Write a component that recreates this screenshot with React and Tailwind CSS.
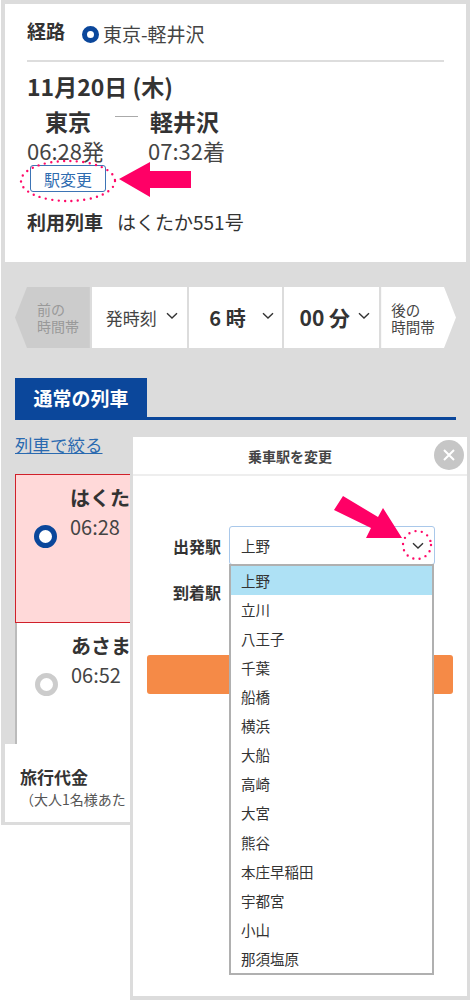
const stations = ["上野", "立川", "八王子", "千葉", "船橋", "横浜", "大船", "高崎", "大宮", "熊谷", "本庄早稲田", "宇都宮", "小山", "那須塩原"];

function Chevron({ className }) {
  return (
    <svg className={className} width="12" height="8" viewBox="0 0 12 8" fill="none">
      <path d="M1 1.2 6 6l5-4.8" stroke="#333" strokeWidth="1.4" />
    </svg>
  );
}

function Radio({ on }) {
  return (
    <span className={`block h-[23px] w-[23px] rounded-full border-[5px] bg-white ${on ? "border-[#0b479b]" : "border-[#cccccc]"}`} />
  );
}

function TrainRow({ name, time, on }) {
  return (
    <div className={`flex ${on ? "h-[149px] border border-[#d0202a] bg-[#ffd9d9]" : "h-[121px] border-l-2 border-[#bbbbbb] bg-white"}`}>
      <div className="flex w-[54px] shrink-0 items-start justify-center pl-[5px] pt-[50px]">
        <Radio on={on} />
      </div>
      <div className="pt-[8px]">
        <div className="text-[20px] leading-[30px] font-bold whitespace-nowrap text-[#333]">{name}</div>
        <div className="text-[20px] leading-[28px] text-[#444]">{time}</div>
      </div>
    </div>
  );
}

function Modal() {
  return (
    <div className="absolute top-[437px] left-[133px] h-[559px] w-[334px] bg-white">
      <div className="relative flex h-[39px] items-center justify-center border-b-2 border-[#eeeeee]">
        <span className="pr-[20px] pt-[1px] text-[14px] font-bold text-[#444]">乗車駅を変更</span>
        <span className="absolute top-[3px] right-[3px] flex h-[30px] w-[30px] items-center justify-center rounded-full bg-[#c6c6c6]">
          <svg width="14" height="14" viewBox="0 0 14 14" fill="none">
            <path d="M2 2l10 10M12 2 2 12" stroke="#fff" strokeWidth="2" />
          </svg>
        </span>
      </div>

      <div className="flex items-center pt-[50px]">
        <span className="w-[96px] pl-[40px] text-[16px] font-bold text-[#333]">出発駅</span>
        <div className="flex h-[39px] w-[206px] items-center justify-between rounded-[3px] border border-[#a9c8ea] pr-[10px] pl-[11px] text-[14.5px] text-[#333]">
          上野
          <Chevron />
        </div>
      </div>
      <div className="pt-[4px] pl-[40px] text-[16px] leading-[46px] font-bold text-[#333]">到着駅</div>
      <div className="mx-[14px] mt-[40px] h-[39px] rounded-[3px] bg-[#f58a47]" />

      {/* open select list */}
      <div className="absolute top-[127px] left-[96px] w-[205px] border-2 border-[#b0b0b0] bg-white">
        {stations.map((s, i) => (
          <div key={s} className={`flex h-[29.1px] items-center pl-[10px] text-[14.5px] text-[#333] ${i === 0 ? "bg-[#aee1f5]" : ""}`}>
            {s}
          </div>
        ))}
      </div>
    </div>
  );
}

export default function App() {
  return (
    <div
      className="relative h-[1000px] w-[470px] overflow-hidden bg-white text-[#333]"
      style={{ fontFamily: '"Noto Sans CJK JP", "Noto Sans", sans-serif' }}
    >
      <div className="ml-[1px] h-[825px] bg-[#dcdcdc] pt-[4px] pl-[4px]">
        {/* Top card */}
        <div className="h-[258px] w-[461px] bg-white px-[22px]">
          <div className="flex h-[58px] items-center border-b-2 border-[#dddddd] pt-[4px]">
            <span className="w-[55px] pb-[6px] text-[19px] font-bold">経路</span>
            <span className="h-[17px] w-[17px] rounded-full border-[5px] border-[#0b479b] bg-white" />
            <span className="pl-[4px] text-[19px] text-[#444]">東京-軽井沢</span>
          </div>
          <div className="pt-[8px] text-[23px] leading-[32px] font-bold">11月20日 (木)</div>
          <div className="flex items-center pt-[2px]">
            <span className="w-[88px] pl-[18px] text-[23px] leading-[34px] font-bold">東京</span>
            <span className="h-[1px] w-[23px] -translate-y-[5px] bg-[#aaaaaa]" />
            <span className="pl-[12px] text-[23px] leading-[34px] font-bold">軽井沢</span>
          </div>
          <div className="flex -translate-y-[1px] text-[22px] leading-[27px] text-[#444]">
            <span className="w-[121px]">06:28発</span>
            <span>07:32着</span>
          </div>
          <div className="ml-[3px] flex h-[27px] w-[76px] items-center justify-center rounded-[3px] border-[1.5px] border-[#3d74b5] text-[16px] text-[#2f6cb0]">
            駅変更
          </div>
          <div className="flex items-center pt-[16px]">
            <span className="w-[90px] text-[19px] leading-[28px] font-bold">利用列車</span>
            <span className="text-[19px] leading-[28px] text-[#333]">はくたか551号</span>
          </div>
        </div>

        {/* Time selector */}
        <div className="mt-[25px] ml-[10px] flex h-[61px] w-[441px] gap-[2px]">
          <div className="flex w-[75px] items-center justify-center bg-[#cccccc] pl-[11px] text-[14px] leading-[17px] text-[#999] [clip-path:polygon(16%_0,100%_0,100%_100%,16%_100%,0_50%)]">
            <span>前の<br />時間帯</span>
          </div>
          <div className="flex w-[95px] items-center justify-center gap-[9px] bg-white pl-[5px] text-[17px] text-[#444]">
            発時刻 <Chevron className="-translate-y-[2px]" />
          </div>
          <div className="flex w-[94px] items-center justify-center gap-[16px] bg-white pl-[12px] text-[20px] font-bold">
            6 時 <Chevron className="-translate-y-[2px]" />
          </div>
          <div className="flex w-[95px] items-center justify-center gap-[8px] bg-white pl-[6px] text-[21px] font-bold">
            00 分 <Chevron className="-translate-y-[2px]" />
          </div>
          <div className="flex w-[75px] items-center bg-white pl-[10px] text-[14.5px] leading-[17px] text-[#444] [clip-path:polygon(0_0,84%_0,100%_50%,84%_100%,0_100%)]">
            <span>後の<br />時間帯</span>
          </div>
        </div>

        {/* Tabs */}
        <div className="mt-[30px] ml-[10px] w-[441px] border-b-[3px] border-[#0b479b]">
          <div className="flex h-[39px] w-[132px] items-center justify-center bg-[#0b479b] pt-[1px] text-[19px] font-bold text-white">通常の列車</div>
        </div>
        <a className="mt-[12px] ml-[10px] block text-[17.5px] leading-[26px] text-[#2a6ab0] underline">列車で絞る</a>

        {/* Trains */}
        <div className="mt-[16px] ml-[10px]">
          <TrainRow name="はくたか551号" time="06:28" on />
          <TrainRow name="あさま603号" time="06:52" />
        </div>

        {/* Price bar */}
        <div className="h-[78px] w-[460px] bg-white pt-[20px] pl-[15px]">
          <div className="text-[17px] leading-[26px] font-bold">旅行代金</div>
          <div className="text-[14px] leading-[18px] text-[#555]">（大人1名様あた</div>
        </div>
      </div>

      <div className="absolute inset-y-0 left-[130px] w-[340px] bg-[#dcdcdc] [clip-path:polygon(0_437px,100%_437px,100%_100%,0_100%)]" />
      <Modal />

      {/* Annotations */}
      <svg className="absolute top-0 left-0" width="470" height="1000" viewBox="0 0 470 1000" fill="none">
        <ellipse cx="68" cy="181" rx="47" ry="20" stroke="#ff0a68" strokeWidth="2.4" strokeLinecap="round" strokeDasharray="0 6.4" />
        <polygon points="119,179 150,162 150,171 191,171 191,188 150,188 150,197" fill="#ff0066" />
        <polygon points="343,496 378,517 383,508 402,538 366,538 371,528 334,510" fill="#ff0066" />
        <circle cx="417" cy="545" r="14" stroke="#ff0a68" strokeWidth="2.4" strokeLinecap="round" strokeDasharray="0 6.4" />
      </svg>
    </div>
  );
}
